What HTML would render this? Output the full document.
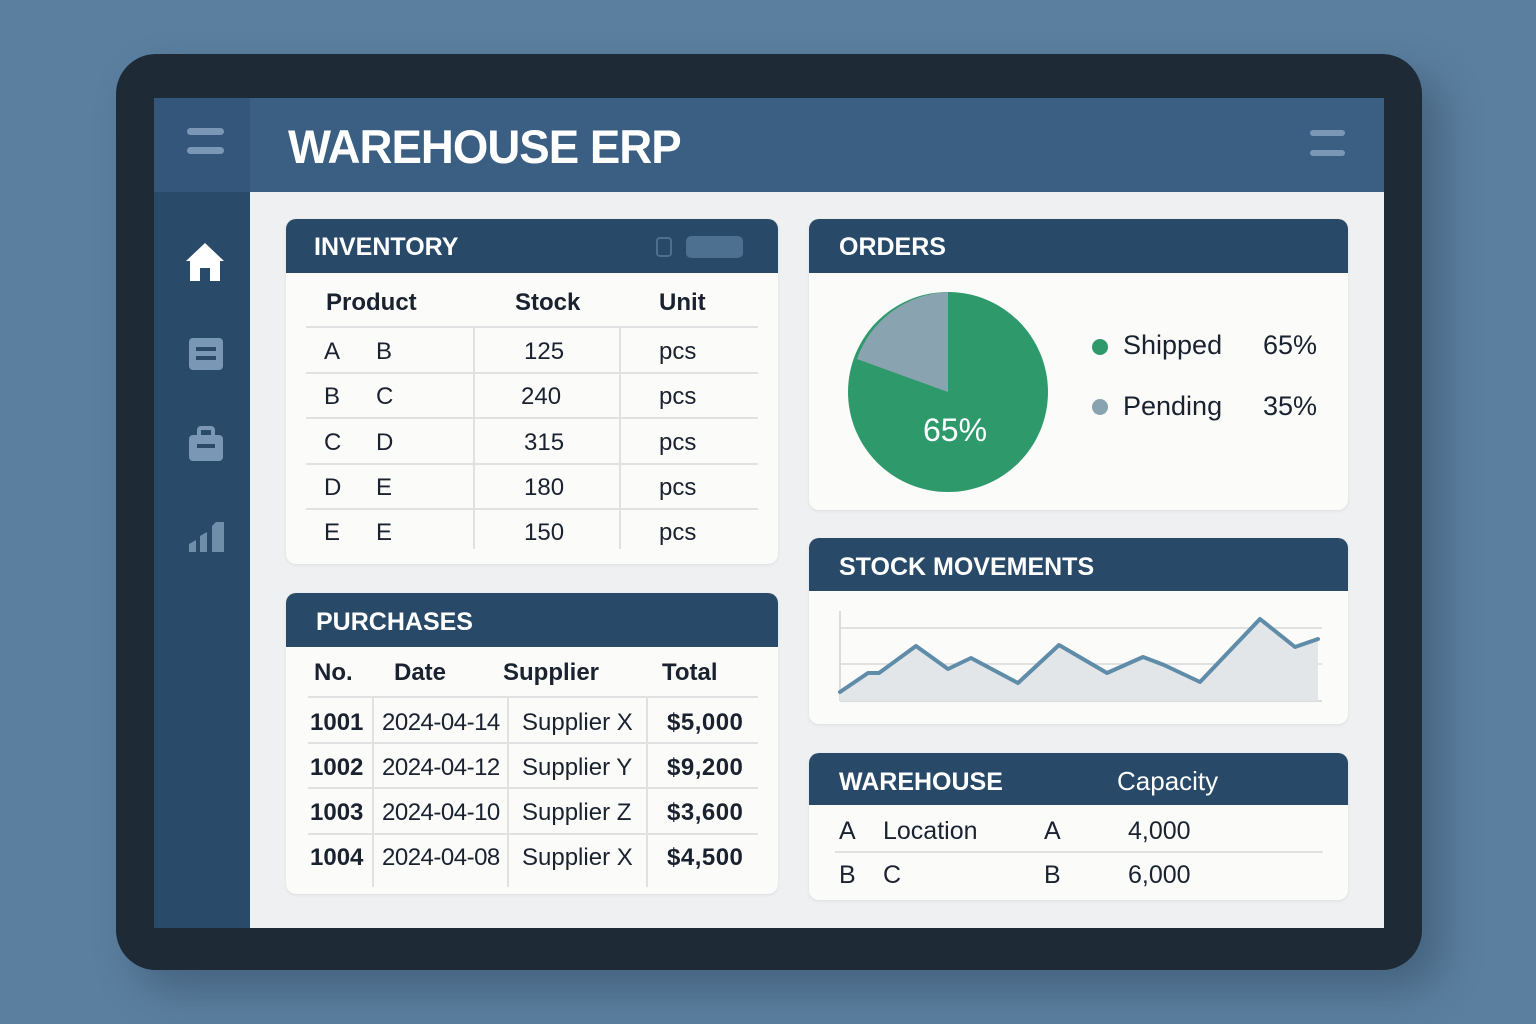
<!DOCTYPE html>
<html><head><meta charset="utf-8"><style>
*{margin:0;padding:0;box-sizing:border-box}
body{width:1536px;height:1024px;background:#5b7f9f;font-family:"Liberation Sans","DejaVu Sans",sans-serif;position:relative;overflow:hidden;color:#1a2230}
.a{position:absolute}
.dev{left:116px;top:54px;width:1306px;height:916px;background:#1e2a36;border-radius:40px;box-shadow:20px 20px 40px rgba(30,50,70,.35)}
.card{position:absolute;background:#fbfbf9;border-radius:10px;overflow:hidden;box-shadow:0 1px 3px rgba(0,0,0,.08)}
.ch{position:absolute;left:0;top:0;right:0;background:#284a68;color:#fff;font-weight:bold;font-size:25px;padding-left:28px}
.t{position:absolute;font-size:24px;white-space:nowrap}
.b{font-weight:bold}
.hl{position:absolute;height:2px;background:#dfe1e2}
.vl{position:absolute;width:2px;background:#dfe1e2}
</style></head><body>
<div class="a dev"></div>
<div class="a" style="left:154px;top:98px;width:1230px;height:830px;background:#eef0f1"></div>
<div class="a" style="left:154px;top:98px;width:96px;height:830px;background:#2a4a69"></div>
<div class="a" style="left:154px;top:98px;width:96px;height:94px;background:#33567a"></div>
<div class="a" style="left:250px;top:98px;width:1134px;height:94px;background:#3a5f82"></div>
<div class="a" style="left:288px;top:119px;color:#fff;font-weight:bold;font-size:47px;letter-spacing:-1px;transform:scaleX(0.97);transform-origin:left">WAREHOUSE ERP</div>
<div class="a" style="left:187px;top:128px;width:37px;height:7px;border-radius:4px;background:#7a98b6"></div>
<div class="a" style="left:187px;top:147px;width:37px;height:7px;border-radius:4px;background:#7a98b6"></div>
<div class="a" style="left:1310px;top:130px;width:35px;height:6px;border-radius:3px;background:#7a98b6"></div>
<div class="a" style="left:1310px;top:150px;width:35px;height:6px;border-radius:3px;background:#7a98b6"></div>
<svg class="a" style="left:184px;top:241px" width="42" height="42" viewBox="0 0 42 42"><path d="M21 2 L40 20 L36 20 L36 40 L26 40 L26 27 L16 27 L16 40 L6 40 L6 20 L2 20 Z" fill="#fff"/></svg>
<svg class="a" style="left:188px;top:337px" width="36" height="34" viewBox="0 0 36 34"><rect x="1" y="1" width="34" height="32" rx="4" fill="#7a98b6"/><rect x="8" y="10" width="20" height="4" fill="#2a4a69"/><rect x="8" y="19" width="20" height="4" fill="#2a4a69"/></svg>
<svg class="a" style="left:188px;top:426px" width="36" height="36" viewBox="0 0 36 36"><rect x="11" y="2" width="14" height="9" rx="2" fill="none" stroke="#7a98b6" stroke-width="4"/><rect x="1" y="9" width="34" height="26" rx="4" fill="#7a98b6"/><rect x="9" y="18" width="18" height="4" fill="#2a4a69"/></svg>
<svg class="a" style="left:188px;top:518px" width="38" height="34" viewBox="0 0 38 34"><path d="M1 34 L1 26 L8 22 L8 34Z M12 34 L12 18 L19 14 L19 34Z M24 34 L24 8 L28 4 L36 4 L36 34 Z" fill="#6f8ea9"/></svg>

<div class="card" style="left:286px;top:219px;width:492px;height:345px">
 <div class="ch" style="height:54px;line-height:56px">INVENTORY</div>
 <div class="a" style="left:400px;top:17px;width:57px;height:22px;border-radius:5px;background:#4d6f90"></div>
 <div class="a" style="left:370px;top:18px;width:16px;height:20px;border-radius:4px;border:2px solid #4d6f90"></div>
 <div class="t b" style="left:40px;top:70px">Product</div>
 <div class="t b" style="left:229px;top:70px">Stock</div>
 <div class="t b" style="left:373px;top:70px">Unit</div>
 <div class="hl" style="left:20px;top:107px;width:452px"></div>
 <div class="hl" style="left:20px;top:153px;width:452px"></div>
 <div class="hl" style="left:20px;top:198px;width:452px"></div>
 <div class="hl" style="left:20px;top:244px;width:452px"></div>
 <div class="hl" style="left:20px;top:289px;width:452px"></div>
 <div class="vl" style="left:187px;top:108px;height:222px"></div>
 <div class="vl" style="left:333px;top:108px;height:222px"></div>
 <div class="t" style="left:38px;top:119px">A</div><div class="t" style="left:90px;top:119px">B</div><div class="t" style="left:238px;top:119px">125</div><div class="t" style="left:373px;top:119px">pcs</div>
 <div class="t" style="left:38px;top:164px">B</div><div class="t" style="left:90px;top:164px">C</div><div class="t" style="left:235px;top:164px">240</div><div class="t" style="left:373px;top:164px">pcs</div>
 <div class="t" style="left:38px;top:210px">C</div><div class="t" style="left:90px;top:210px">D</div><div class="t" style="left:238px;top:210px">315</div><div class="t" style="left:373px;top:210px">pcs</div>
 <div class="t" style="left:38px;top:255px">D</div><div class="t" style="left:90px;top:255px">E</div><div class="t" style="left:238px;top:255px">180</div><div class="t" style="left:373px;top:255px">pcs</div>
 <div class="t" style="left:38px;top:300px">E</div><div class="t" style="left:90px;top:300px">E</div><div class="t" style="left:238px;top:300px">150</div><div class="t" style="left:373px;top:300px">pcs</div>
</div>

<div class="card" style="left:286px;top:593px;width:492px;height:301px">
 <div class="ch" style="height:54px;line-height:58px;padding-left:30px">PURCHASES</div>
 <div class="t b" style="left:28px;top:66px">No.</div>
 <div class="t b" style="left:108px;top:66px">Date</div>
 <div class="t b" style="left:217px;top:66px">Supplier</div>
 <div class="t b" style="left:376px;top:66px">Total</div>
 <div class="hl" style="left:22px;top:103px;width:450px"></div>
 <div class="hl" style="left:22px;top:149px;width:450px"></div>
 <div class="hl" style="left:22px;top:194px;width:450px"></div>
 <div class="hl" style="left:22px;top:240px;width:450px"></div>
 <div class="vl" style="left:86px;top:104px;height:190px"></div>
 <div class="vl" style="left:221px;top:104px;height:190px"></div>
 <div class="vl" style="left:360px;top:104px;height:190px"></div>
 <div class="t b" style="left:24px;top:116px">1001</div><div class="t" style="left:96px;top:116px;letter-spacing:-0.5px">2024-04-14</div><div class="t" style="left:236px;top:116px">Supplier X</div><div class="t b" style="left:381px;top:116px;letter-spacing:0.5px">$5,000</div>
 <div class="t b" style="left:24px;top:161px">1002</div><div class="t" style="left:96px;top:161px;letter-spacing:-0.5px">2024-04-12</div><div class="t" style="left:236px;top:161px">Supplier Y</div><div class="t b" style="left:381px;top:161px;letter-spacing:0.5px">$9,200</div>
 <div class="t b" style="left:24px;top:206px">1003</div><div class="t" style="left:96px;top:206px;letter-spacing:-0.5px">2024-04-10</div><div class="t" style="left:236px;top:206px">Supplier Z</div><div class="t b" style="left:381px;top:206px;letter-spacing:0.5px">$3,600</div>
 <div class="t b" style="left:24px;top:251px">1004</div><div class="t" style="left:96px;top:251px;letter-spacing:-0.5px">2024-04-08</div><div class="t" style="left:236px;top:251px">Supplier X</div><div class="t b" style="left:381px;top:251px;letter-spacing:0.5px">$4,500</div>
</div>

<div class="card" style="left:809px;top:219px;width:539px;height:291px">
 <div class="ch" style="height:54px;line-height:56px;padding-left:30px">ORDERS</div>
 <svg class="a" style="left:0;top:0" width="539" height="291">
  <circle cx="139" cy="173" r="100" fill="#2e9a6c"/>
  <path d="M139 173 L139 73 A100 100 0 0 0 48 140 Z" fill="#8aa3b0"/>
  <circle cx="291" cy="128" r="8" fill="#2e9a6c"/>
  <circle cx="291" cy="188" r="8" fill="#8aa3b0"/>
 </svg>
 <div class="t" style="left:114px;top:193px;color:#fff;font-size:32px">65%</div>
 <div class="t" style="left:314px;top:111px;font-size:27px">Shipped</div>
 <div class="t" style="left:454px;top:111px;font-size:27px">65%</div>
 <div class="t" style="left:314px;top:172px;font-size:27px">Pending</div>
 <div class="t" style="left:454px;top:172px;font-size:27px">35%</div>
</div>

<div class="card" style="left:809px;top:538px;width:539px;height:186px">
 <div class="ch" style="height:53px;line-height:58px;padding-left:30px">STOCK MOVEMENTS</div>
 <svg class="a" style="left:-809px;top:-538px" width="1536" height="1024">
  <line x1="840" y1="611" x2="840" y2="701" stroke="#d0d3d5" stroke-width="1.5"/>
  <line x1="840" y1="628" x2="1322" y2="628" stroke="#d8dadb" stroke-width="1.5"/>
  <line x1="840" y1="664" x2="1322" y2="664" stroke="#d8dadb" stroke-width="1.5"/>
  <line x1="840" y1="701" x2="1322" y2="701" stroke="#d0d3d5" stroke-width="1.5"/>
  <path d="M840 692 L868 673 L879 673 L916 646 L948 669 L971 658 L1018 683 L1059 645 L1107 673 L1143 657 L1164 665 L1200 682 L1260 619 L1295 647 L1318 639 L1318 701 L840 701 Z" fill="#e3e6e8"/>
  <path d="M840 692 L868 673 L879 673 L916 646 L948 669 L971 658 L1018 683 L1059 645 L1107 673 L1143 657 L1164 665 L1200 682 L1260 619 L1295 647 L1318 639" fill="none" stroke="#5f8ca8" stroke-width="4" stroke-linejoin="round" stroke-linecap="round"/>
 </svg>
</div>

<div class="card" style="left:809px;top:753px;width:539px;height:147px">
 <div class="ch" style="height:52px;line-height:58px;padding-left:30px">WAREHOUSE</div>
 <div class="t" style="left:308px;top:13px;color:#fff;font-size:26px">Capacity</div>
 <div class="t" style="left:30px;top:64px;font-size:25px">A</div>
 <div class="t" style="left:74px;top:64px;font-size:25px">Location</div>
 <div class="t" style="left:235px;top:64px;font-size:25px">A</div>
 <div class="t" style="left:319px;top:64px;font-size:25px">4,000</div>
 <div class="hl" style="left:26px;top:98px;width:488px"></div>
 <div class="t" style="left:30px;top:108px;font-size:25px">B</div>
 <div class="t" style="left:74px;top:108px;font-size:25px">C</div>
 <div class="t" style="left:235px;top:108px;font-size:25px">B</div>
 <div class="t" style="left:319px;top:108px;font-size:25px">6,000</div>
</div>
</body></html>
